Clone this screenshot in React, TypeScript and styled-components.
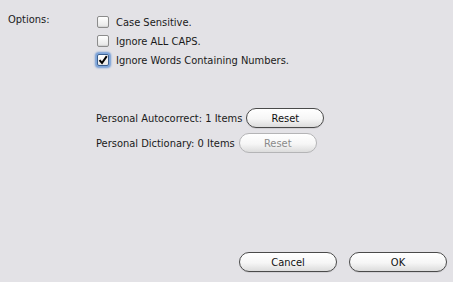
import React from 'react'
import styled, { createGlobalStyle } from 'styled-components'

const GlobalStyle = createGlobalStyle`
  html, body {
    margin: 0;
    padding: 0;
    background: #e3e2e6;
  }
  body {
    font-family: 'DejaVu Sans Condensed', 'DejaVu Sans', Verdana, sans-serif;
    font-size: 11px;
    color: #1a1a1a;
  }
`

const Dialog = styled.div`
  width: 453px;
  height: 282px;
  box-sizing: border-box;
  display: flex;
  flex-direction: column;
  padding: 13px 6px 10px 8px;
`

const OptionsGrid = styled.div`
  display: grid;
  grid-template-columns: 89px 1fr;
`

const SectionLabel = styled.div`
  line-height: 14px;
`

const OptionList = styled.div`
  display: flex;
  flex-direction: column;
`

const OptionRow = styled.label`
  display: flex;
  align-items: center;
  gap: 7px;
  height: 20px;
  margin-top: -1px;
`

const Box = styled.span<{ checked?: boolean }>`
  width: 10px;
  height: 10px;
  border: 1px solid ${({ checked }) => (checked ? '#3a5f8f' : '#8c8c8c')};
  border-radius: 2px;
  background: linear-gradient(#ffffff, #e6e6e6);
  display: flex;
  align-items: center;
  justify-content: center;
  flex-shrink: 0;
  box-shadow: ${({ checked }) =>
    checked ? '0 0 0 1px #7fa6db, 0 0 2px 2px #6d98d4' : 'inset 0 -1px 1px rgba(0,0,0,0.08)'};
`

const Counters = styled.div`
  margin-top: 38px;
  margin-left: 88px;
  display: flex;
  flex-direction: column;
  gap: 5px;
`

const CounterRow = styled.div`
  display: flex;
  align-items: center;
  gap: 4px;
`

const PillButton = styled.button<{ width: number; disabled?: boolean }>`
  width: ${({ width }) => width}px;
  height: 20px;
  border-radius: 10px;
  border: 1px solid ${({ disabled }) => (disabled ? '#b4b4b6' : '#4a4a4a')};
  background: linear-gradient(#ffffff 0%, #f6f6f6 55%, #dcdcdc 100%);
  font-family: inherit;
  font-size: 11px;
  color: ${({ disabled }) => (disabled ? '#8a8a8a' : '#111')};
  padding: 0;
  box-shadow: ${({ disabled }) => (disabled ? 'none' : '0 1px 0 rgba(0,0,0,0.08)')};
`

const Footer = styled.div`
  margin-top: auto;
  display: flex;
  justify-content: flex-end;
  gap: 12px;
`

const Check = () => (
  <svg width="10" height="10" viewBox="0 0 10 10">
    <path d="M1.5 5.2 L4 8 L8.8 1.2" fill="none" stroke="#000" strokeWidth="2" strokeLinejoin="miter" />
  </svg>
)

const options = [
  { label: 'Case Sensitive.', checked: false },
  { label: 'Ignore ALL CAPS.', checked: false },
  { label: 'Ignore Words Containing Numbers.', checked: true },
]

export default function App() {
  return (
    <>
      <GlobalStyle />
      <Dialog>
        <OptionsGrid>
          <SectionLabel>Options:</SectionLabel>
          <OptionList>
            {options.map((o) => (
              <OptionRow key={o.label}>
                <Box checked={o.checked}>{o.checked && <Check />}</Box>
                {o.label}
              </OptionRow>
            ))}
          </OptionList>
        </OptionsGrid>
        <Counters>
          <CounterRow>
            Personal Autocorrect: 1 Items
            <PillButton width={78}>Reset</PillButton>
          </CounterRow>
          <CounterRow>
            Personal Dictionary: 0 Items
            <PillButton width={78} disabled>
              Reset
            </PillButton>
          </CounterRow>
        </Counters>
        <Footer>
          <PillButton width={98}>Cancel</PillButton>
          <PillButton width={98}>OK</PillButton>
        </Footer>
      </Dialog>
    </>
  )
}
